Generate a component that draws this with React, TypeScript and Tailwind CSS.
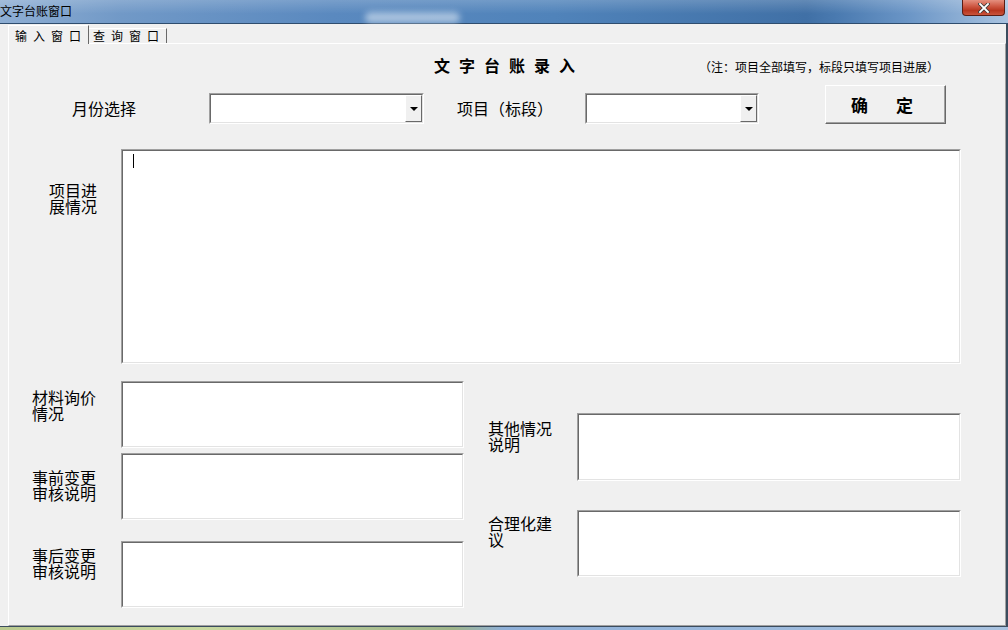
import React from "react";

function Sunken({ className = "", children }: { className?: string; children?: React.ReactNode }) {
  return (
    <div className={"box-border border-t border-l border-[#a0a0a0] border-b border-r border-b-white border-r-white " + className}>
      <div className="box-border w-full h-full border-t border-l border-[#696969] border-b border-r border-b-[#e3e3e3] border-r-[#e3e3e3] bg-white relative">
        {children}
      </div>
    </div>
  );
}

function Combo({ className = "" }: { className?: string }) {
  return (
    <Sunken className={className}>
      <div className="absolute right-0 top-0 bottom-0 w-[17px] box-border border-t border-l border-white border-b border-r border-b-[#696969] border-r-[#696969] bg-[#f0f0f0] flex items-center justify-center">
        <div className="w-0 h-0 border-l-[4px] border-r-[4px] border-t-[4px] border-l-transparent border-r-transparent border-t-black" />
      </div>
    </Sunken>
  );
}

function Label({ lines, className = "" }: { lines: string[]; className?: string }) {
  return (
    <div className={"text-[16px] leading-[16px] text-black shrink-0 " + className}>
      {lines.map((l, i) => (
        <div key={i} className="whitespace-nowrap">{l}</div>
      ))}
    </div>
  );
}

export default function App() {
  return (
    <div className="w-[1008px] h-[630px] overflow-hidden flex flex-col bg-[#f0f0f0] font-['Noto_Sans_CJK_SC',sans-serif] text-black">
      {/* Title bar */}
      <div className="h-[23px] shrink-0 relative bg-[linear-gradient(to_right,#8eaed3_0%,#7199c7_12%,#5a89bf_33%,#5083ba_55%,#4070a6_80%,#4a7ab0_83%,#6a95c6_90%,#a9c3e0_100%)]">
        <div className="absolute inset-0 bg-[linear-gradient(to_bottom,rgba(255,255,255,0.18),rgba(255,255,255,0)_60%)]" />
        <div className="absolute left-[365px] top-[12px] w-[95px] h-[11px] rounded-[6px] bg-[rgba(235,242,250,0.55)] blur-[3px]" />
        <div className="relative pt-[4px] pl-0 text-[12px] leading-[13px] text-black">文字台账窗口</div>
        <div className="absolute left-[962px] top-0 w-[43px] h-[16px] box-border border border-t-0 border-[#5a1d14] rounded-b-[4px] bg-[linear-gradient(to_bottom,#e4907f_0%,#cf5a45_40%,#b8361f_70%,#c9543c_100%)] flex items-center justify-center">
          <svg width="12" height="10" viewBox="0 0 12 10">
            <path d="M2 1 L10 9 M10 1 L2 9" stroke="#3b3b3b" strokeWidth="3.4" strokeLinecap="square" />
            <path d="M2 1 L10 9 M10 1 L2 9" stroke="#ffffff" strokeWidth="1.8" strokeLinecap="square" />
          </svg>
        </div>
      </div>
      <div className="h-[1px] shrink-0 bg-[#2f4d6e]" />

      {/* Body */}
      <div className="flex-1 flex flex-col box-border border-r-2 border-[#3b4c5e]">
        {/* Tab strip */}
        <div className="h-[19px] shrink-0 flex items-end pl-[8px] relative z-10">
          <div className="w-[81px] h-[19px] mb-[-1px] box-border border-t border-l border-white border-r border-r-[#696969] bg-[#f0f0f0] pl-[6px] pt-[4px] flex gap-[6px] text-[12px] leading-[12px]">
            <span>输</span><span>入</span><span>窗</span><span>口</span>
          </div>
          <div className="w-[78px] h-[15px] box-border border-t border-white border-r border-r-[#696969] bg-[#f0f0f0] pl-[4px] pt-[1px] flex gap-[6px] text-[12px] leading-[12px]">
            <span>查</span><span>询</span><span>窗</span><span>口</span>
          </div>
        </div>

        {/* Panel */}
        <div className="flex-1 ml-[8px] box-border border-t border-l border-white border-b border-r border-b-[#a0a0a0] border-r-[#a0a0a0] flex flex-col">
          {/* Header */}
          <div className="h-[41px] shrink-0 flex items-start">
            <div className="ml-[425px] mt-[13px] flex gap-[9px] text-[16px] leading-[16px] font-bold">
              <span>文</span><span>字</span><span>台</span><span>账</span><span>录</span><span>入</span>
            </div>
            <div className="ml-[124px] mt-[17px] text-[12px] leading-[12px] whitespace-nowrap">（注：项目全部填写，标段只填写项目进展）</div>
          </div>

          {/* Row 2 */}
          <div className="h-[39px] shrink-0 flex items-start">
            <div className="ml-[63px] mt-[15px] w-[64px] text-[16px] leading-[16px] whitespace-nowrap">月份选择</div>
            <Combo className="ml-[73px] mt-[8px] w-[215px] h-[31px] shrink-0" />
            <div className="ml-[33px] mt-[15px] w-[96px] text-[16px] leading-[16px] whitespace-nowrap">项目（标段）</div>
            <Combo className="ml-[32px] mt-[8px] w-[174px] h-[31px] shrink-0" />
            <div className="ml-[66px] w-[121px] h-[39px] shrink-0 box-border border-t border-l border-white border-b border-r border-b-[#696969] border-r-[#696969]">
              <div className="w-full h-full box-border border-b border-r border-b-[#a0a0a0] border-r-[#a0a0a0] bg-[#f0f0f0] flex items-center justify-center gap-[28px] pr-[6px] text-[17px] leading-[17px] font-bold">
                <span>确</span><span>定</span>
              </div>
            </div>
          </div>

          {/* Big text area */}
          <div className="mt-[25px] flex items-start shrink-0">
            <Label lines={["项目进", "展情况"]} className="ml-[40px] mt-[33px] w-[48px]" />
            <Sunken className="ml-[24px] w-[840px] h-[215px] shrink-0">
              <div className="absolute left-[10px] top-[3px] w-[1px] h-[14px] bg-black" />
            </Sunken>
          </div>

          {/* Lower section */}
          <div className="mt-[17px] flex items-start shrink-0">
            {/* Left column */}
            <div className="flex flex-col">
              <div className="flex items-start">
                <Label lines={["材料询价", "情况"]} className="ml-[23px] mt-[8px] w-[64px]" />
                <Sunken className="ml-[25px] w-[343px] h-[67px] shrink-0" />
              </div>
              <div className="mt-[5px] flex items-start">
                <Label lines={["事前变更", "审核说明"]} className="ml-[23px] mt-[16px] w-[64px]" />
                <Sunken className="ml-[25px] w-[343px] h-[67px] shrink-0" />
              </div>
              <div className="mt-[21px] flex items-start">
                <Label lines={["事后变更", "审核说明"]} className="ml-[23px] mt-[6px] w-[64px]" />
                <Sunken className="ml-[25px] w-[343px] h-[67px] shrink-0" />
              </div>
            </div>
            {/* Right column */}
            <div className="ml-[24px] mt-[32px] flex flex-col">
              <div className="flex items-start">
                <Label lines={["其他情况", "说明"]} className="mt-[7px] w-[64px]" />
                <Sunken className="ml-[25px] w-[384px] h-[68px] shrink-0" />
              </div>
              <div className="mt-[29px] flex items-start">
                <Label lines={["合理化建", "议"]} className="mt-[5px] w-[64px]" />
                <Sunken className="ml-[25px] w-[384px] h-[67px] shrink-0" />
              </div>
            </div>
          </div>
        </div>
      </div>
      <div className="h-[1px] shrink-0 bg-[#3b4c5e]" />
      <div className="h-[3px] shrink-0 bg-[linear-gradient(to_right,#b9c98f_0%,#c8d8a0_20%,#9fb58a_45%,#8fb0d8_50%,#a9c3e0_100%)]" />
    </div>
  );
}
